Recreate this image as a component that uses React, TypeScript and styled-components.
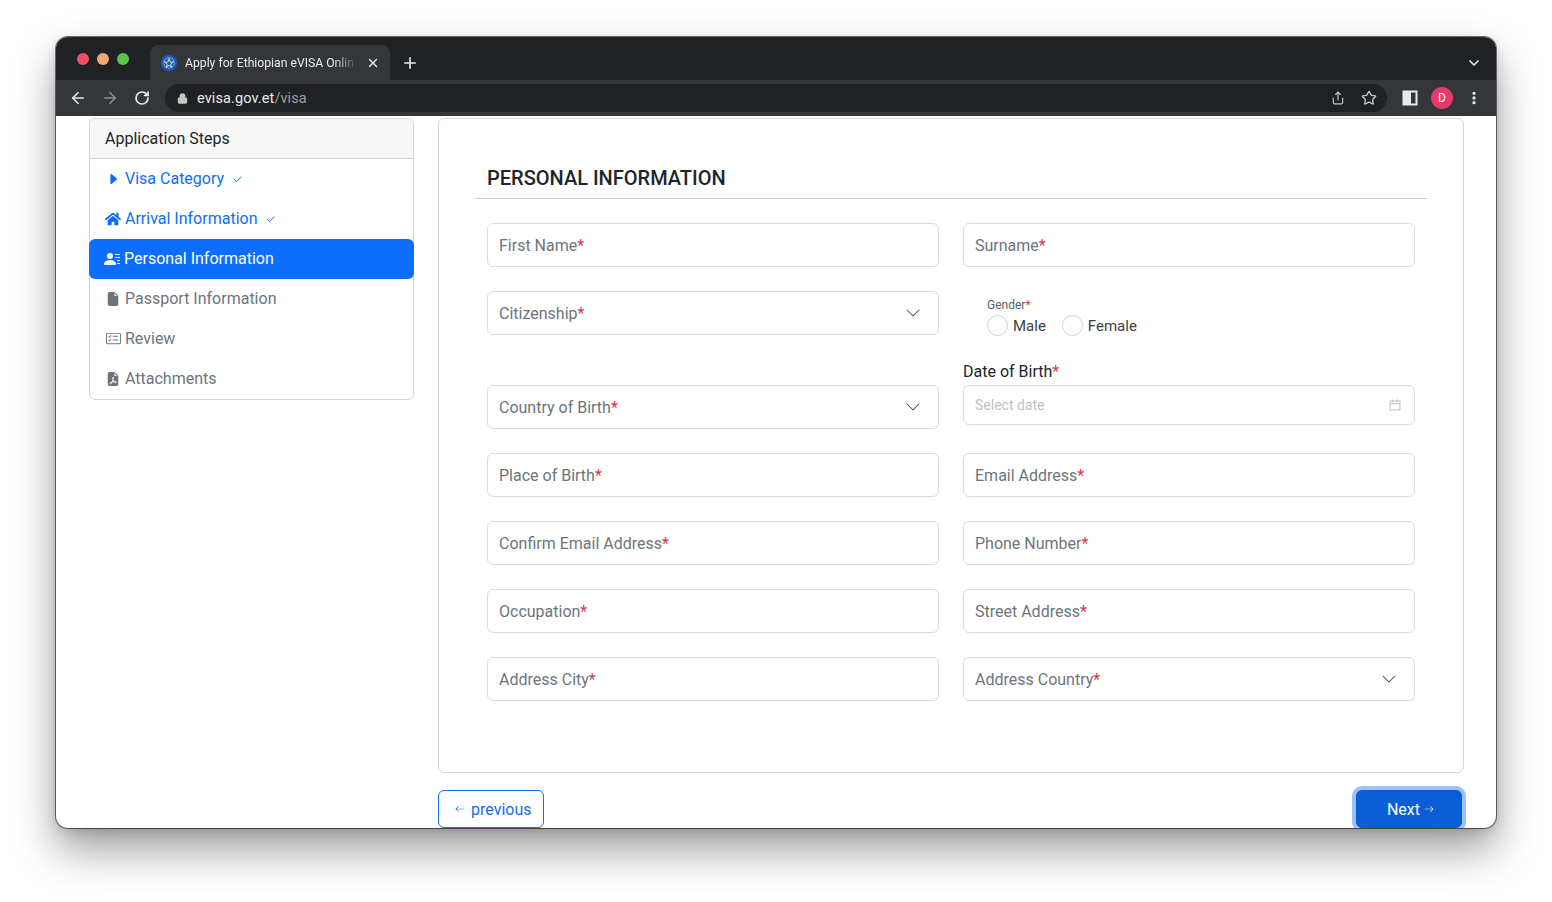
import styled, {createGlobalStyle} from 'styled-components';
import {
    BsCaretRightFill,
    BsPersonLinesFill,
    BsFileEarmarkFill,
    BsCardChecklist,
    BsFileEarmarkPdfFill,
    BsCheck2,
    BsChevronDown,
    BsArrowLeft,
    BsArrowRight,
} from 'react-icons/bs';
import {FaHome} from 'react-icons/fa';
import {AiOutlineCalendar} from 'react-icons/ai';
import {ArrowLeft, ArrowRight, RotateCw, Lock, Share, Star, MoreVertical, ChevronDown, Plus, X} from 'lucide-react';

const GlobalStyle = createGlobalStyle`
    html, body {
        margin: 0;
        padding: 0;
        background: #ffffff;
        font-family: Roboto, "Liberation Sans", Arial, sans-serif;
    }
    * {
        box-sizing: border-box;
    }
`;

const Page = styled.div`
    width: 1552px;
    height: 902px;
    padding: 37px 56px 0;
    overflow: hidden;
`;

const Window = styled.div`
    width: 1440px;
    height: 791px;
    border-radius: 12px;
    overflow: hidden;
    display: flex;
    flex-direction: column;
    background: #fff;
    box-shadow: 0 0 0 1px rgba(0, 0, 0, 0.55), 0 22px 44px rgba(0, 0, 0, 0.38), 0 4px 12px rgba(0, 0, 0, 0.15);
`;

const TitleBar = styled.div`
    height: 43px;
    background: #202124;
    display: flex;
    align-items: flex-end;
    padding-left: 21px;
    padding-right: 14px;
`;

const Lights = styled.div`
    display: flex;
    gap: 8px;
    align-self: center;
    margin-top: 1px;
`;

const Light = styled.span<{ $color: string }>`
    width: 12px;
    height: 12px;
    border-radius: 50%;
    background: ${props => props.$color};
`;

const Tab = styled.div`
    margin-left: 21px;
    width: 240px;
    height: 35px;
    background: #35363a;
    border-radius: 8px 8px 0 0;
    display: flex;
    align-items: center;
    padding: 0 10px 0 11px;
    gap: 8px;
    color: #e8eaed;
`;

const TabTitle = styled.span`
    flex: 1;
    min-width: 0;
    font-size: 12.2px;
    white-space: nowrap;
    -webkit-mask-image: linear-gradient(to right, #000 86%, transparent 100%);
    mask-image: linear-gradient(to right, #000 86%, transparent 100%);
`;

const TabButton = styled.span`
    display: flex;
    align-items: center;
    justify-content: center;
    color: #e8eaed;
`;

const NewTab = styled.span`
    height: 35px;
    width: 40px;
    display: flex;
    align-items: center;
    justify-content: center;
    color: #e8eaed;
`;

const Spacer = styled.div`
    flex: 1;
`;

const TabsMenu = styled.span`
    height: 35px;
    display: flex;
    align-items: center;
    color: #e8eaed;
`;

const Toolbar = styled.div`
    height: 36px;
    background: #35363a;
    display: flex;
    align-items: center;
    padding: 0 8px;
    gap: 4px;
`;

const NavButton = styled.span<{ $dim?: boolean }>`
    width: 28px;
    height: 28px;
    display: flex;
    align-items: center;
    justify-content: center;
    color: ${props => props.$dim ? '#8a8c90' : '#e8eaed'};
`;

const Omnibox = styled.div`
    flex: 1;
    height: 28px;
    margin: 0 5px;
    border-radius: 14px;
    background: #202124;
    display: flex;
    align-items: center;
    padding: 0 10px 0 12px;
    gap: 9px;
    font-size: 14.5px;
    letter-spacing: 0.1px;
`;

const Host = styled.span`
    color: #e8eaed;
`;

const UrlPath = styled.span`
    color: #9aa0a6;
`;

const OmniIcons = styled.div`
    margin-left: auto;
    display: flex;
    gap: 16px;
    align-items: center;
    color: #c4c7c5;
`;

const Avatar = styled.span`
    width: 22px;
    height: 22px;
    border-radius: 50%;
    background: #e8396b;
    color: #fff;
    font-size: 12px;
    display: flex;
    align-items: center;
    justify-content: center;
`;

const Content = styled.div`
    flex: 1;
    overflow: hidden;
    display: flex;
    align-items: flex-start;
    padding: 2px 32px 0 33px;
    gap: 24px;
    color: #212529;
`;

const Sidebar = styled.div`
    width: 325px;
    flex-shrink: 0;
    border: 1px solid #d3d5d8;
    border-radius: 6px;
`;

const SidebarHeader = styled.div`
    height: 40px;
    background: #f7f7f7;
    border-bottom: 1px solid #d3d5d8;
    border-radius: 6px 6px 0 0;
    display: flex;
    align-items: center;
    padding: 0 15px 1px;
    font-size: 16px;
`;

const StepItem = styled.div<{ $state: 'done' | 'active' | 'todo' }>`
    height: 40px;
    display: flex;
    align-items: center;
    padding: 0 15px 1px;
    gap: 4px;
    font-size: 16px;
    border-radius: ${props => props.$state === 'active' ? '6px' : '0'};
    margin: ${props => props.$state === 'active' ? '0 -1px' : '0'};
    background: ${props => props.$state === 'active' ? '#0d6efd' : 'transparent'};
    color: ${props => props.$state === 'done' ? '#0d6efd' : props.$state === 'active' ? '#ffffff' : '#6c757d'};
`;

const StepIcon = styled.span`
    width: 16px;
    display: flex;
    align-items: center;
    justify-content: center;
`;

const StepCheck = styled.span`
    display: flex;
    margin-left: 4px;
    margin-top: 2px;
`;

const MainColumn = styled.div`
    width: 1026px;
    flex-shrink: 0;
    display: flex;
    flex-direction: column;
`;

const Card = styled.div`
    border: 1px solid #d3d5d8;
    border-radius: 6px;
    padding: 47px 36px 71px;
`;

const SectionTitle = styled.h2`
    margin: 0 0 8px 12px;
    font-size: 20px;
    line-height: 24px;
    font-weight: 500;
`;

const Rule = styled.hr`
    margin: 0;
    border: 0;
    border-top: 1px solid #cfcfcf;
`;

const FormGrid = styled.div`
    margin-top: 24px;
    padding: 0 12px;
    display: grid;
    grid-template-columns: 1fr 1fr;
    column-gap: 24px;
    row-gap: 24px;
    align-items: end;
`;

const InputBox = styled.div<{ $height?: number }>`
    height: ${props => props.$height ?? 44}px;
    border: 1px solid #d9dbde;
    border-radius: 6px;
    display: flex;
    align-items: center;
    padding: 0 17px 0 11px;
    font-size: 16px;
    color: #6c757d;
`;

const Req = styled.span`
    color: #dc3545;
`;

const Chevron = styled.span`
    margin-left: auto;
    display: flex;
    color: #4a4f54;
`;

const GenderGroup = styled.div`
    height: 44px;
    padding-left: 24px;
    display: flex;
    flex-direction: column;
    justify-content: flex-end;
`;

const SmallLabel = styled.div`
    font-size: 12px;
    line-height: 14px;
    color: #5a5f64;
    margin-bottom: 3px;
`;

const RadioRow = styled.div`
    display: flex;
    align-items: center;
    gap: 16px;
    margin-bottom: -1px;
`;

const RadioOption = styled.label`
    display: flex;
    align-items: center;
    gap: 5px;
    font-size: 15px;
    color: #3a3f44;
`;

const RadioCircle = styled.span`
    width: 21px;
    height: 21px;
    border-radius: 50%;
    border: 1.5px solid #cfd1d4;
    background: #fff;
`;

const DateField = styled.div`
    padding: 3px 0 4px;
`;

const FieldLabel = styled.div`
    font-size: 16px;
    line-height: 20px;
    margin-bottom: 3px;
    color: #212529;
`;

const DatePlaceholder = styled.span`
    font-size: 14px;
    color: #bfbfbf;
`;

const CalendarIcon = styled.span`
    margin-left: auto;
    display: flex;
    color: #bfbfbf;
    margin-right: -5px;
`;

const ButtonRow = styled.div`
    margin-top: 17px;
    display: flex;
    justify-content: space-between;
    padding-right: 2px;
`;

const Button = styled.button<{ $primary?: boolean }>`
    height: 38px;
    border-radius: 6px;
    font-family: inherit;
    font-size: 16px;
    display: flex;
    align-items: center;
    gap: ${props => props.$primary ? '4px' : '6px'};
    cursor: pointer;
    padding: ${props => props.$primary ? '0 27px 0 30px' : '0 12px 0 16px'};
    border: 1px solid ${props => props.$primary ? '#0a58ca' : '#0d6efd'};
    background: ${props => props.$primary ? '#0b5ed7' : '#ffffff'};
    color: ${props => props.$primary ? '#ffffff' : '#0d6efd'};
    box-shadow: ${props => props.$primary ? '0 0 0 4px rgba(49, 132, 253, 0.5)' : 'none'};
`;

function Favicon() {
    return (
        <svg width="16" height="16" viewBox="0 0 16 16">
            <circle cx="8" cy="8" r="8" fill="#1d5bc4"/>
            <circle cx="8" cy="8" r="5.2" fill="none" stroke="#8fb0e8" strokeWidth="0.8"/>
            <polygon points="8,3.6 9.1,7 12.4,7 9.7,9 10.7,12.3 8,10.3 5.3,12.3 6.3,9 3.6,7 6.9,7"
                     fill="none" stroke="#f4e28a" strokeWidth="0.9"/>
        </svg>
    );
}

function SidePanelIcon() {
    return (
        <svg width="16" height="16" viewBox="0 0 16 16">
            <rect x="1.5" y="1.5" width="13" height="13" fill="none" stroke="#e8eaed" strokeWidth="2"/>
            <rect x="2" y="2" width="7" height="12" fill="#e8eaed"/>
        </svg>
    );
}

interface IStep {
    label: string;
    state: 'done' | 'active' | 'todo';
    icon: JSX.Element;
}

const steps: IStep[] = [
    {label: 'Visa Category', state: 'done', icon: <BsCaretRightFill size={14}/>},
    {label: 'Arrival Information', state: 'done', icon: <FaHome size={16}/>},
    {label: 'Personal Information', state: 'active', icon: <BsPersonLinesFill size={16}/>},
    {label: 'Passport Information', state: 'todo', icon: <BsFileEarmarkFill size={14}/>},
    {label: 'Review', state: 'todo', icon: <BsCardChecklist size={15}/>},
    {label: 'Attachments', state: 'todo', icon: <BsFileEarmarkPdfFill size={14}/>},
];

function TextInput({label, select}: { label: string, select?: boolean }) {
    return (
        <InputBox>
            {label}<Req>*</Req>
            {select && <Chevron><BsChevronDown size={16}/></Chevron>}
        </InputBox>
    );
}

function App() {
    return (
        <Page>
            <GlobalStyle/>
            <Window>
                <TitleBar>
                    <Lights>
                        <Light $color="#ec4f62"/>
                        <Light $color="#eaa979"/>
                        <Light $color="#5bc44a"/>
                    </Lights>
                    <Tab>
                        <Favicon/>
                        <TabTitle>Apply for Ethiopian eVISA Onlin</TabTitle>
                        <TabButton><X size={14} strokeWidth={2.5}/></TabButton>
                    </Tab>
                    <NewTab><Plus size={18} strokeWidth={2.2}/></NewTab>
                    <Spacer/>
                    <TabsMenu><ChevronDown size={16} strokeWidth={2.5}/></TabsMenu>
                </TitleBar>
                <Toolbar>
                    <NavButton><ArrowLeft size={18} strokeWidth={2.2}/></NavButton>
                    <NavButton $dim><ArrowRight size={18} strokeWidth={2.2}/></NavButton>
                    <NavButton><RotateCw size={16} strokeWidth={2.6}/></NavButton>
                    <Omnibox>
                        <Lock size={11} strokeWidth={2.5} color="#c4c7c5" fill="#c4c7c5"/>
                        <span><Host>evisa.gov.et</Host><UrlPath>/visa</UrlPath></span>
                        <OmniIcons>
                            <Share size={14} strokeWidth={2}/>
                            <Star size={16} strokeWidth={2}/>
                        </OmniIcons>
                    </Omnibox>
                    <NavButton><SidePanelIcon/></NavButton>
                    <NavButton><Avatar>D</Avatar></NavButton>
                    <NavButton><MoreVertical size={16} strokeWidth={3}/></NavButton>
                </Toolbar>
                <Content>
                    <Sidebar>
                        <SidebarHeader>Application Steps</SidebarHeader>
                        {steps.map(step => (
                            <StepItem key={step.label} $state={step.state}>
                                <StepIcon>{step.icon}</StepIcon>
                                {step.label}
                                {step.state === 'done' && <StepCheck><BsCheck2 size={11}/></StepCheck>}
                            </StepItem>
                        ))}
                    </Sidebar>
                    <MainColumn>
                        <Card>
                            <SectionTitle>PERSONAL INFORMATION</SectionTitle>
                            <Rule/>
                            <FormGrid>
                                <TextInput label="First Name"/>
                                <TextInput label="Surname"/>
                                <TextInput label="Citizenship" select/>
                                <GenderGroup>
                                    <SmallLabel>Gender<Req>*</Req></SmallLabel>
                                    <RadioRow>
                                        <RadioOption><RadioCircle/>Male</RadioOption>
                                        <RadioOption><RadioCircle/>Female</RadioOption>
                                    </RadioRow>
                                </GenderGroup>
                                <TextInput label="Country of Birth" select/>
                                <DateField>
                                    <FieldLabel>Date of Birth<Req>*</Req></FieldLabel>
                                    <InputBox $height={40}>
                                        <DatePlaceholder>Select date</DatePlaceholder>
                                        <CalendarIcon><AiOutlineCalendar size={14}/></CalendarIcon>
                                    </InputBox>
                                </DateField>
                                <TextInput label="Place of Birth"/>
                                <TextInput label="Email Address"/>
                                <TextInput label="Confirm Email Address"/>
                                <TextInput label="Phone Number"/>
                                <TextInput label="Occupation"/>
                                <TextInput label="Street Address"/>
                                <TextInput label="Address City"/>
                                <TextInput label="Address Country" select/>
                            </FormGrid>
                        </Card>
                        <ButtonRow>
                            <Button><BsArrowLeft size={10}/> previous</Button>
                            <Button $primary>Next <BsArrowRight size={10}/></Button>
                        </ButtonRow>
                    </MainColumn>
                </Content>
            </Window>
        </Page>
    );
}

export default App;
